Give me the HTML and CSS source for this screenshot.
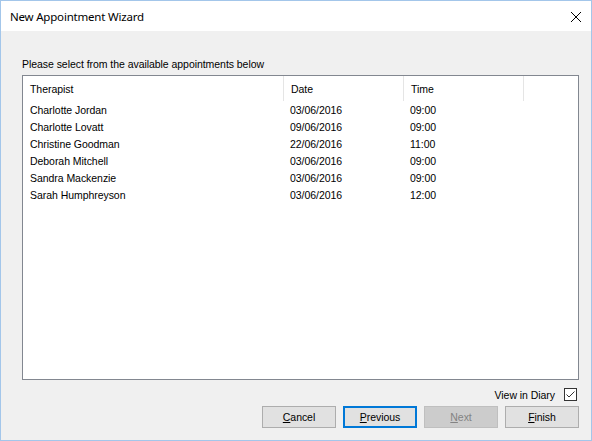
FILE: index.html
```html
<!DOCTYPE html>
<html>
<head>
<meta charset="utf-8">
<link rel="stylesheet" href="styles.css">
</head>
<body>
<div class="window">
  <div class="titlebar">
    <span class="title">New Appointment Wizard</span>
    <svg class="close" width="12" height="12" viewBox="0 0 12 12"><path d="M1 1 L11 11 M11 1 L1 11" stroke="#000" stroke-width="1" fill="none"/></svg>
  </div>
  <div class="content">
    <div class="label">Please select from the available appointments below</div>
    <div class="listbox">
      <div class="row header">
        <div class="col c1">Therapist</div>
        <div class="col c2">Date</div>
        <div class="col c3">Time</div>
        <div class="col c4"></div>
      </div>
      <div class="row"><div class="col c1">Charlotte Jordan</div><div class="col c2">03/06/2016</div><div class="col c3">09:00</div></div>
      <div class="row"><div class="col c1">Charlotte Lovatt</div><div class="col c2">09/06/2016</div><div class="col c3">09:00</div></div>
      <div class="row"><div class="col c1">Christine Goodman</div><div class="col c2">22/06/2016</div><div class="col c3">11:00</div></div>
      <div class="row"><div class="col c1">Deborah Mitchell</div><div class="col c2">03/06/2016</div><div class="col c3">09:00</div></div>
      <div class="row"><div class="col c1">Sandra Mackenzie</div><div class="col c2">03/06/2016</div><div class="col c3">09:00</div></div>
      <div class="row"><div class="col c1">Sarah Humphreyson</div><div class="col c2">03/06/2016</div><div class="col c3">12:00</div></div>
    </div>
    <div class="checkrow">
      <span>View in Diary</span>
      <span class="checkbox"><svg width="11" height="11" viewBox="0 0 11 11"><path d="M1.5 5.5 L4 8 L9.5 2.5" stroke="#333" stroke-width="1" fill="none"/></svg></span>
    </div>
    <div class="buttons">
      <button class="btn"><u>C</u>ancel</button>
      <button class="btn default"><u>P</u>revious</button>
      <button class="btn disabled"><u>N</u>ext</button>
      <button class="btn"><u>F</u>inish</button>
    </div>
  </div>
</div>
</body>
</html>
```

FILE: styles.css
```css
html, body {
  margin: 0;
  padding: 0;
}
body {
  width: 592px;
  height: 441px;
  overflow: hidden;
  font-family: "Liberation Sans", Arial, sans-serif;
  font-size: 10.5px;
  letter-spacing: -0.05px;
  color: #000;
}
.window {
  box-sizing: border-box;
  width: 592px;
  height: 441px;
  border: 1px solid #a3c6ea;
  display: flex;
  flex-direction: column;
  background: #f0f0f0;
}
.titlebar {
  height: 30px;
  background: #fff;
  display: flex;
  align-items: center;
  justify-content: space-between;
  padding: 0 9px 0 9px;
  flex: none;
}
.title {
  font-family: "Noto Sans", "Open Sans", sans-serif;
  font-size: 11.5px;
  letter-spacing: -0.2px;
}
.close {
  display: block;
  margin-top: 1px;
}
.content {
  flex: 1;
  display: flex;
  flex-direction: column;
  padding: 27px 12px 12px 21px;
}
.label {
  line-height: 13px;
  height: 13px;
  margin-bottom: 4px;
}
.listbox {
  flex: 1;
  background: #fff;
  border: 1px solid #828790;
}
.row {
  display: flex;
  height: 17px;
  line-height: 17px;
}
.row.header {
  height: 25px;
  line-height: 25px;
  margin-bottom: 1px;
}
.col {
  box-sizing: border-box;
  padding-left: 7px;
  white-space: nowrap;
}
.c1 { width: 260px; }
.c2 { width: 120px; }
.c3 { width: 120px; }
.header .col {
  border-right: 1px solid #e5e5e5;
  padding-top: 1px;
  line-height: 24px;
}
.header .c1 { width: 261px; }
.header .c4 { border-right: none; }
.checkrow {
  margin-top: 8px;
  height: 13px;
  display: flex;
  justify-content: flex-end;
  align-items: center;
  gap: 9px;
  padding-right: 2px;
}
.checkbox {
  box-sizing: border-box;
  width: 13px;
  height: 13px;
  border: 1px solid #333;
  background: #fff;
  display: flex;
}
.checkbox svg { display: block; }
.buttons {
  margin-top: 5px;
  display: flex;
  justify-content: flex-end;
  gap: 7px;
}
.btn {
  box-sizing: border-box;
  width: 74px;
  height: 22px;
  margin: 0;
  padding: 0;
  background: #e1e1e1;
  border: 1px solid #adadad;
  font-family: "Liberation Sans", Arial, sans-serif;
  font-size: 10.5px;
  letter-spacing: -0.05px;
  color: #000;
}
.btn.default {
  border: 2px solid #0078d7;
}
.btn.disabled {
  background: #cccccc;
  border-color: #bfbfbf;
  color: #838383;
}
```
